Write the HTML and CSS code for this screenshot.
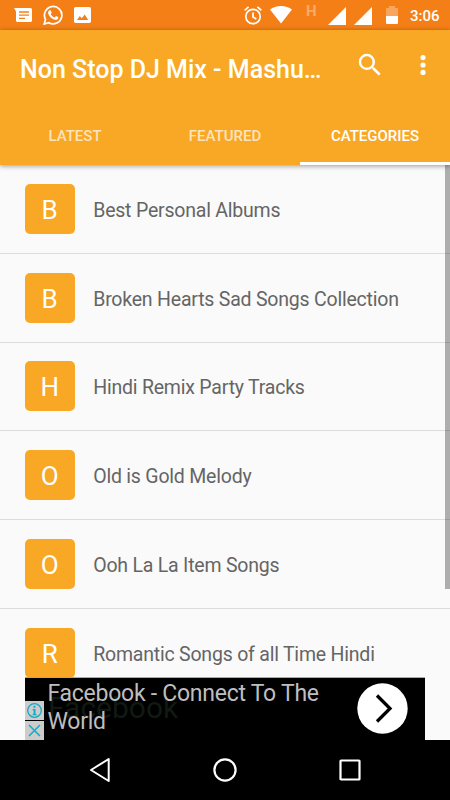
FILE: index.html
```html
<!DOCTYPE html>
<html lang="en">
<head>
<meta charset="utf-8">
<title>Non Stop DJ Mix</title>
<link rel="stylesheet" href="styles.css">
</head>
<body>
<div class="screen">
  <div class="status">
    <div class="status-left">
      <svg width="19" height="16" viewBox="0 0 19 16"><path fill="#fff" d="M0 1h16.500q1.500 0 1.500 1.500v11q0 1.500-1.500 1.500h-13q-1.500 0-1.500-1.500V4.500z"/><path stroke="#f57f17" stroke-width="1.300" d="M5 5h10M5 8.200h10M5 11.400h6"/></svg>
      <svg width="20" height="20" viewBox="0 0 20 20"><path fill="none" stroke="#fff" stroke-width="1.700" d="M1.200 19 2.500 14.300A8.700 8.700 0 1 1 5.800 17.700z"/><path fill="#fff" d="M6.600 5.300c.5-.3 1-.2 1.200.2l.8 1.900c.1.500-.6 1.100-.9 1.500.9 1.800 2.200 2.800 4 3.500l1.200-1.400 2.300 1.100c.4.600-.1 1.900-1 2.400-1.200.6-2.600.2-4.300-.6-2.200-1.100-3.900-3.300-4.600-4.900-.6-1.600.1-3.200 1.300-3.700z"/></svg>
      <svg class="photo" width="17" height="16" viewBox="0 0 17 16"><rect width="17" height="16" rx="1.800" fill="#fff"/><path fill="#f57f17" d="m3 13 2.800-4 2 2.300 2.900-3.800L14.200 13z"/></svg>
    </div>
    <div class="status-right">
      <svg class="alarm" width="18" height="19" viewBox="0 0 18 19"><g fill="none" stroke="#fff" stroke-width="1.700"><circle cx="9" cy="10.500" r="7.200"/><path d="M.6 4.300 4.600.9m8.800 0 4 3.400M9 6.400v4.500l3.300 2"/></g></svg>
      <svg class="wifi" width="22" height="18" viewBox="0 0 22 18"><path fill="#fff" d="M0 3.600C3 1.200 6.700 0 11 0s8 1.200 11 3.600L11 17.500z"/></svg>
      <span class="network">H</span>
      <svg class="sig" width="18" height="18" viewBox="0 0 18 18"><path fill="#fff" d="M18 0v18H0z"/></svg>
      <svg class="sig2" width="18" height="18" viewBox="0 0 18 18"><path fill="#fff" d="M18 0v18H0z"/></svg>
      <svg class="battery" width="12" height="18" viewBox="0 0 12 18"><path fill="#fff" fill-opacity=".3" d="M0 3q0-1 1-1h2V0h6v2h2q1 0 1 1v7H0z"/><path fill="#fff" d="M0 10h12v7q0 1-1 1H1q-1 0-1-1z"/></svg>
      <span class="clock">3:06</span>
    </div>
  </div>

  <header class="appbar">
    <div class="toolbar">
      <h1>Non Stop DJ Mix - Mashu…</h1>
      <svg class="search" width="30" height="30" viewBox="0 0 24 24"><path fill="#fff" d="M15.500 14h-.79l-.28-.27A6.471 6.471 0 0 0 16 9.500 6.500 6.500 0 1 0 9.500 16c1.610 0 3.090-.59 4.230-1.570l.27.28v.79l5 4.990L20.490 19l-4.990-5zm-6 0C7.010 14 5 11.990 5 9.500S7.010 5 9.500 5 14 7.010 14 9.500 11.990 14 9.500 14z"/></svg>
      <svg class="more" width="6" height="20" viewBox="0 0 6 20"><g fill="#fff"><circle cx="3" cy="2.600" r="2.600"/><circle cx="3" cy="10" r="2.600"/><circle cx="3" cy="17.400" r="2.600"/></g></svg>
    </div>
    <nav class="tabs">
      <div class="tab">LATEST</div>
      <div class="tab">FEATURED</div>
      <div class="tab active">CATEGORIES</div>
    </nav>
  </header>

  <main class="list">
    <div class="row"><span class="tile">B</span><span class="name">Best Personal Albums</span></div>
    <div class="row"><span class="tile">B</span><span class="name">Broken Hearts Sad Songs Collection</span></div>
    <div class="row"><span class="tile">H</span><span class="name">Hindi Remix Party Tracks</span></div>
    <div class="row"><span class="tile">O</span><span class="name">Old is Gold Melody</span></div>
    <div class="row"><span class="tile">O</span><span class="name">Ooh La La Item Songs</span></div>
    <div class="row"><span class="tile">R</span><span class="name">Romantic Songs of all Time Hindi</span></div>
    <div class="scrollbar"></div>
    <aside class="ad">
      <div class="ad-badges">
        <svg width="19" height="19" viewBox="0 0 19 19"><rect width="19" height="19" fill="#ccc"/><circle cx="9.500" cy="9.500" r="6.800" fill="none" stroke="#10aacb" stroke-width="1.300"/><path fill="#10aacb" d="M8.500 4.800h2v2h-2zM7.700 8h2.800v5h1v1.200H7.700V13h.9V9.200h-.9z"/></svg>
        <svg width="19" height="19" viewBox="0 0 19 19"><rect width="19" height="19" fill="#ccc"/><path stroke="#10aacb" stroke-width="1.500" d="m4 4 11 11M15 4 4 15"/></svg>
      </div>
      <div class="ad-ghost">Facebook</div>
      <p class="ad-text">Facebook - Connect To The<br>World</p>
      <svg class="ad-go" width="51" height="51" viewBox="0 0 51 51"><circle cx="25.500" cy="25.500" r="25.200" fill="#fff"/><path fill="none" stroke="#000" stroke-width="3.300" d="m20 12.500 13 13-13 13"/></svg>
    </aside>
  </main>

  <footer class="navbar">
    <svg width="24" height="26" viewBox="0 0 24 26"><path fill="none" stroke="#fff" stroke-width="2" stroke-linejoin="round" d="M20.700 2v22L3 13z"/></svg>
    <svg width="26" height="26" viewBox="0 0 26 26"><circle cx="13" cy="13" r="10.600" fill="none" stroke="#fff" stroke-width="2.200"/></svg>
    <svg width="24" height="26" viewBox="0 0 24 26"><rect x="2.500" y="3.500" width="19" height="19" rx=".6" fill="none" stroke="#fff" stroke-width="2.200"/></svg>
  </footer>
</div>
</body>
</html>
```
FILE: styles.css
```css
* { box-sizing: border-box; }
body { margin: 0; font-family: Roboto, sans-serif; }
svg { display: block; flex: none; }

.screen {
  width: 450px;
  height: 800px;
  display: flex;
  flex-direction: column;
  overflow: hidden;
  background: #fafafa;
}

.status {
  height: 30px;
  flex: none;
  display: flex;
  justify-content: space-between;
  align-items: center;
  padding: 0 10px 0 14px;
  background: #f57f17;
  color: #fff;
}
.status-left { display: flex; align-items: center; gap: 10px; }
.photo { margin-left: 1px; }
.status-right { display: flex; align-items: center; }
.wifi { margin: 0 0 1px 8px; }
.network {
  width: 12px;
  margin: 0 10px 8px 14px;
  font-size: 15px;
  line-height: 16px;
  font-weight: 700;
  color: rgba(255, 255, 255, .35);
}
.sig, .sig2 { margin-top: 2px; }
.sig2 { margin-left: 8px; }
.battery { margin-left: 14px; }
.clock {
  width: 30px;
  margin-left: 12px;
  font-size: 15px;
  font-weight: 500;
  line-height: 20px;
  margin-top: 1px;
}

.appbar {
  height: 135px;
  flex: none;
  display: flex;
  flex-direction: column;
  background: #f9a825;
  color: #fff;
  z-index: 1;
  box-shadow: 0 1px 5px rgba(0, 0, 0, .4);
}
.toolbar {
  height: 75px;
  display: flex;
  align-items: center;
  padding: 0 24px 0 20px;
}
h1 {
  flex: 1;
  margin: 4px 0 0;
  font-size: 25px;
  font-weight: 500;
  line-height: 32px;
  white-space: nowrap;
}
.search { margin: -5px 35px 0 0; }
.more { margin-top: -5px; }
.tabs { height: 60px; display: flex; }
.tab {
  flex: 1;
  display: flex;
  align-items: center;
  justify-content: center;
  padding-top: 5px;
  border-bottom: 3px solid transparent;
  font-size: 15px;
  font-weight: 500;
  color: rgba(255, 255, 255, .7);
}
.tab.active { color: #fff; border-color: #fff; }

.list {
  position: relative;
  height: 575px;
  flex: none;
  overflow: hidden;
}
.row {
  height: 88.750px;
  display: flex;
  align-items: center;
  gap: 18.500px;
  padding-left: 24.700px;
  border-bottom: 1px solid #dcdcdc;
}
.row:nth-child(6) { border-bottom-color: transparent; }
.name {
  padding-top: 4px;
  font-size: 19.500px;
  line-height: 24px;
  letter-spacing: -.21px;
  color: #656565;
}
.tile {
  width: 50px;
  height: 50px;
  display: flex;
  align-items: center;
  justify-content: center;
  border-radius: 5px;
  padding-top: 2px;
  background: #f9a825;
  color: #fff;
  font-size: 26px;
}
.scrollbar {
  position: absolute;
  top: 0;
  right: 0;
  width: 5px;
  height: 424px;
  background: rgba(0, 0, 0, .3);
}

.ad {
  position: absolute;
  left: 25px;
  bottom: 0;
  width: 400px;
  height: 63px;
  border-top: 1px solid #aaa;
  background: #000;
  display: flex;
}
.ad-badges {
  display: flex;
  flex-direction: column;
  justify-content: flex-end;
  gap: 1px;
}
.ad-text {
  position: relative;
  flex: 1;
  margin: 2px 0 0 3.500px;
  font-size: 23px;
  line-height: 27.500px;
  letter-spacing: -.26px;
  color: #bebebe;
}
.ad-ghost {
  position: absolute;
  left: 23px;
  top: 12px;
  font-size: 30px;
  line-height: 36px;
  color: #101a12;
}
.ad-go { margin: 5px 17px 0 0; }

.navbar {
  height: 60px;
  flex: none;
  display: flex;
  align-items: center;
  justify-content: space-between;
  padding: 0 88px;
  background: #000;
}
```
